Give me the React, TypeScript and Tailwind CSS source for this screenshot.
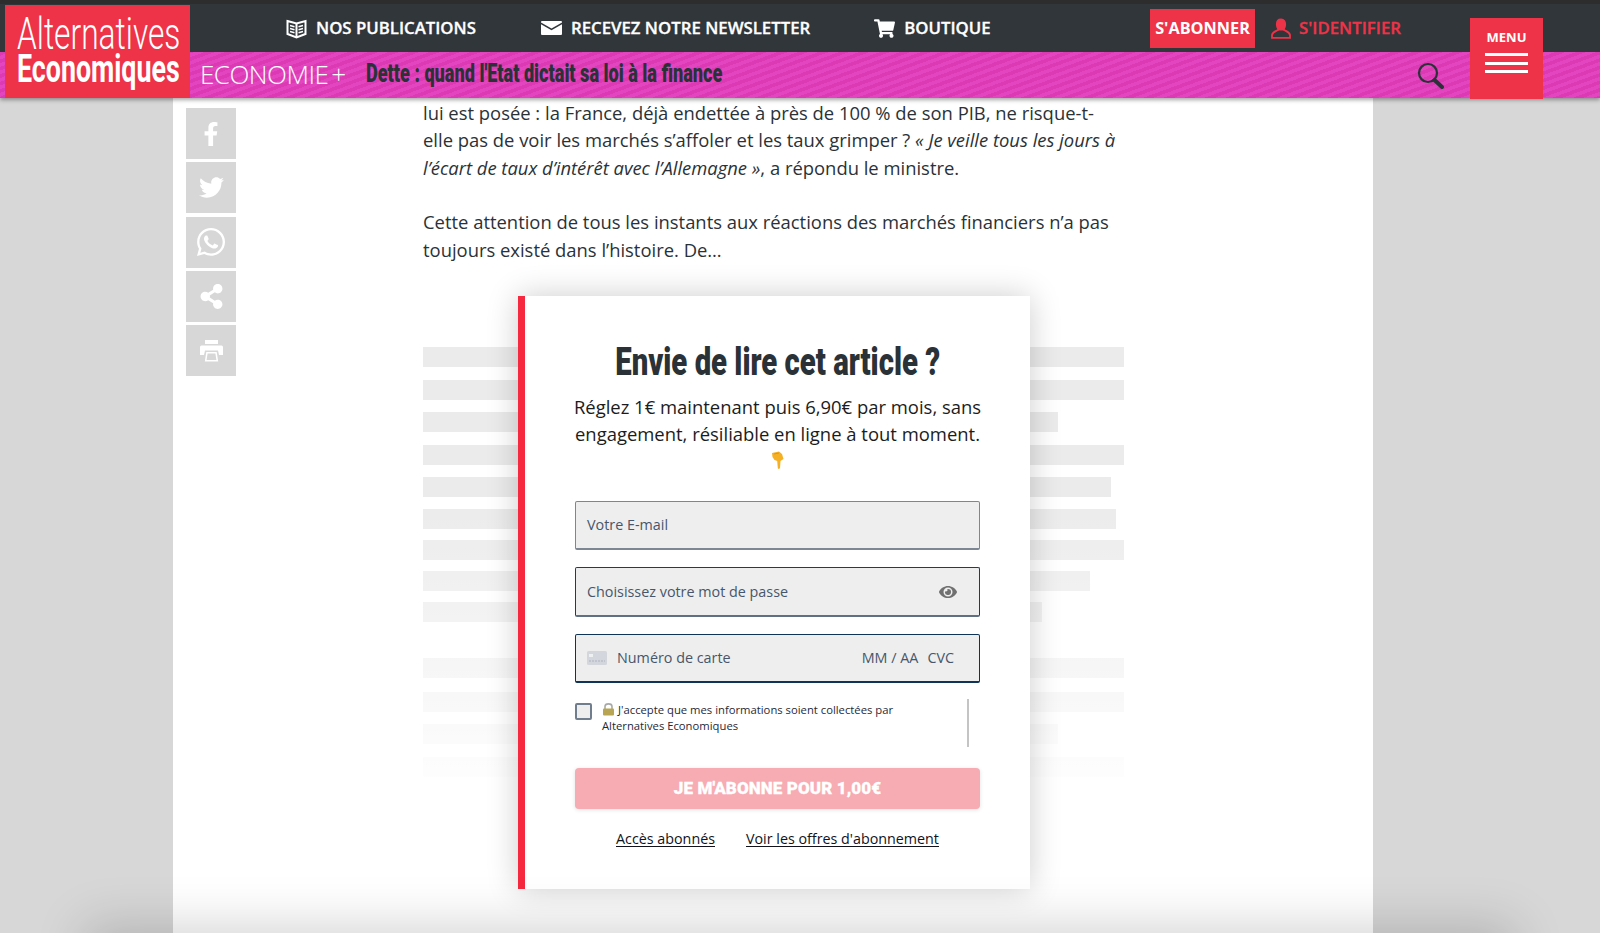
import { FaFacebookF, FaTwitter, FaWhatsapp, FaShareAlt, FaShoppingCart, FaEye } from 'react-icons/fa';

const RED = 'bg-[#ee3348]';

const BARS = [
  { top: 0, width: 701 },
  { top: 13, width: 701 },
  { top: 12, width: 635 },
  { top: 13, width: 701 },
  { top: 12, width: 688 },
  { top: 12, width: 693 },
  { top: 11, width: 701 },
  { top: 11, width: 667 },
  { top: 11, width: 619 },
  { top: 36, width: 701 },
  { top: 14, width: 701 },
  { top: 12, width: 635 },
  { top: 13, width: 701 },
];

function BookIcon() {
  return (
    <svg width="21" height="21" viewBox="0 0 21 21" fill="none" stroke="white" strokeWidth="2">
      <path d="M1.5 3 L10.5 5.5 L19.5 3 V16 L10.5 19.5 L1.5 16 Z" />
      <path d="M10.5 5.5 V19.5" />
      <path d="M4 7.5 L8.5 8.7 M4 10.5 L8.5 11.7 M4 13.5 L8.5 14.7 M17 7.5 L12.5 8.7 M17 10.5 L12.5 11.7 M17 13.5 L12.5 14.7" strokeWidth="1.4" />
    </svg>
  );
}

function MailIcon() {
  return (
    <svg width="21" height="14" viewBox="0 0 21 14" fill="white">
      <path d="M1 0 H20 Q21 0 21 1 V1.4 L10.5 7.4 L0 1.4 V1 Q0 0 1 0 Z" />
      <path d="M0 3.2 L10.5 9.2 L21 3.2 V13 Q21 14 20 14 H1 Q0 14 0 13 Z" />
    </svg>
  );
}

function UserIcon() {
  return (
    <svg width="20" height="21" viewBox="0 0 20 21" fill="none" stroke="#ee3348" strokeWidth="1.8">
      <path d="M10 1.5 C6.8 1.5 5.8 4 5.8 6.5 C5.8 9 7 10.5 7.4 11.5 H12.6 C13 10.5 14.2 9 14.2 6.5 C14.2 4 13.2 1.5 10 1.5 Z" fill="#ee3348" />
      <path d="M7.4 11.5 C6.5 13 1.5 13.5 1 17 V19.8 H19 V17 C18.5 13.5 13.5 13 12.6 11.5" />
    </svg>
  );
}

function SearchIcon() {
  return (
    <svg width="27" height="27" viewBox="0 0 27 27" fill="none" stroke="#2a3237">
      <circle cx="11" cy="11" r="9" strokeWidth="2.2" />
      <path d="M17.5 18 L25 25" strokeWidth="4" strokeLinecap="round" />
    </svg>
  );
}

function PrintIcon() {
  return (
    <svg width="25" height="22" viewBox="0 0 25 22" fill="white">
      <rect x="6" y="0" width="13" height="4" />
      <path d="M1 7 Q1 5.5 2.5 5.5 H22.5 Q24 5.5 24 7 V15 H20 L19 10.5 H6 L5 15 H1 Z" />
      <path d="M7.3 12 H17.7 L19.2 21.5 H5.8 Z M8.6 13.5 L7.6 20 H17.4 L16.4 13.5 Z" fillRule="evenodd" />
    </svg>
  );
}

function HandIcon() {
  return (
    <svg width="14" height="19" viewBox="0 0 14 19">
      <path d="M1 2 L8 0.5 L11 3 L12.5 8 L9.5 10 L9 17 Q7.8 18.8 6.8 17 L6.2 10 L3.5 9 L1.5 6 Z" fill="#f6b024" />
      <path d="M3 3 L8 2" stroke="#d98f10" strokeWidth="0.8" />
    </svg>
  );
}

function LockIcon() {
  return (
    <svg width="13" height="14" viewBox="0 0 13 14" className="mr-[3px] inline-block align-[-2px]">
      <path d="M3 7 V4.5 C3 1 10 1 10 4.5 V7" fill="none" stroke="#a9a9a9" strokeWidth="1.6" />
      <rect x="1" y="6.5" width="11" height="7" rx="1" fill="#b7a553" />
    </svg>
  );
}

function CardIcon() {
  return (
    <svg width="20" height="14" viewBox="0 0 20 14">
      <rect width="20" height="14" rx="1.5" fill="#d3d6dc" />
      <rect x="2" y="3" width="4" height="3" fill="#eef0f2" />
      <path d="M2 10 H18" stroke="#aeb3bc" strokeWidth="1" strokeDasharray="2 1" />
    </svg>
  );
}

function NavItem({ icon, label, className }: { icon: React.ReactNode; label: string; className?: string }) {
  return (
    <a className={`flex items-center gap-[9px] text-[16.8px] font-semibold text-white [-webkit-text-stroke:0.3px] ${className ?? ''}`}>
      <span className="flex w-[21px] justify-center">{icon}</span>
      {label}
    </a>
  );
}

function Header() {
  return (
    <header className="relative z-20 shrink-0 font-['Open_Sans',sans-serif] shadow-[0_2px_4px_rgba(0,0,0,0.35)]">
      <div className="flex h-[52px] items-center border-t-[4px] border-[#2d2d2d] bg-[#30363a] pl-[286px] pr-[199px]">
        <NavItem icon={<BookIcon />} label="NOS PUBLICATIONS" />
        <NavItem icon={<MailIcon />} label="RECEVEZ NOTRE NEWSLETTER" className="ml-[65px]" />
        <NavItem icon={<FaShoppingCart size={21} />} label="BOUTIQUE" className="ml-[64px]" />
        <div className="ml-auto flex items-center">
          <a className={`flex h-[39px] w-[105px] items-center justify-center ${RED} text-[16.3px] font-bold text-white`}>S'ABONNER</a>
          <span className="ml-[16px]"><UserIcon /></span>
          <a className="ml-[8px] text-[16.8px] font-semibold text-[#ee3348] [-webkit-text-stroke:0.3px]">S'IDENTIFIER</a>
        </div>
      </div>
      <div className="flex h-[46px] items-center bg-[repeating-linear-gradient(160deg,#dc39b4_0,#dc39b4_3.5px,#e344bf_3.5px,#e344bf_7px)] pl-[200px] pr-[156px]">
        <span className="-mt-[2px] text-[26px] font-light tracking-[-0.5px] text-white">ECONOMIE</span>
        <span className="-mt-[2px] ml-[3px] text-[26px] font-light text-white">+</span>
        <span className="-mt-[2px] ml-[20px] inline-block origin-left scale-x-[0.725] whitespace-nowrap font-['Roboto',sans-serif] text-[25px] font-black text-[#2a3237]">Dette : quand l'Etat dictait sa loi à la finance</span>
        <span className="ml-auto"><SearchIcon /></span>
      </div>
      <a className={`absolute left-[5px] top-[5px] h-[93px] w-[185px] overflow-hidden ${RED} font-['Roboto',sans-serif] text-white`}>
        <span className="absolute left-[12px] top-[11px] inline-block origin-left scale-x-[0.72] whitespace-nowrap text-[44px] font-light leading-[36px]">Alternatives</span>
        <span className="absolute left-[12px] top-[47px] inline-block origin-left scale-x-[0.705] whitespace-nowrap text-[38px] font-bold leading-[34px]">Economiques</span>
      </a>
      <button className={`absolute left-[1470px] top-[18px] flex h-[81px] w-[73px] flex-col items-center ${RED} pt-[10px] text-[13px] font-bold text-white`}>
        <span className="leading-[18px]">MENU</span>
        <span className="mt-[7px] flex w-[43px] flex-col gap-[5.5px]">
          <span className="h-[3px] bg-white" />
          <span className="h-[3px] bg-white" />
          <span className="h-[3px] bg-white" />
        </span>
      </button>
    </header>
  );
}

function ShareBar() {
  const icons = [
    <FaFacebookF size={24} />,
    <FaTwitter size={25} />,
    <FaWhatsapp size={32} />,
    <FaShareAlt size={25} />,
    <PrintIcon />,
  ];
  return (
    <aside className="mt-[10px] flex w-[50px] shrink-0 flex-col gap-[3.25px]">
      {icons.map((icon, i) => (
        <div key={i} className="flex h-[51px] items-center justify-center bg-[#d7d7d7] text-white">{icon}</div>
      ))}
    </aside>
  );
}

function Paywall() {
  return (
    <div className="absolute left-[345px] top-[198px] z-10 h-[593px] w-[512px] border-l-[7px] border-[#f5283f] bg-white pt-[41px] text-center font-['Open_Sans',sans-serif] shadow-[0_0_30px_rgba(0,0,0,0.2)]">
      <h2 className="inline-block scale-x-[0.771] whitespace-nowrap font-['Roboto',sans-serif] text-[38px] font-black leading-[50px] text-[#2a3237]">Envie de lire cet article ?</h2>
      <p className="mt-[6px] text-[18.45px] leading-[27px] text-[#1c1c1c]">
        Réglez 1€ maintenant puis 6,90€ par mois, sans<br />
        engagement, résiliable en ligne à tout moment.
      </p>
      <div className="flex h-[27px] items-center justify-center"><HandIcon /></div>

      <div className="mx-auto mt-[27px] flex w-[405px] flex-col text-left text-[14.35px] text-[#47566b]">
        <div className="flex h-[49px] items-center rounded-[2px] border border-b-2 border-[#7d8793] bg-[#eeeeee] px-[11px]">Votre E-mail</div>
        <div className="mt-[17px] flex h-[50px] items-center justify-between rounded-[2px] border border-b-2 border-[#173f5f] border-b-[#5f7083] bg-[#eeeeee] pl-[11px] pr-[22px]">
          Choisissez votre mot de passe
          <FaEye size={18} className="text-[#707070]" />
        </div>
        <div className="mt-[17px] flex h-[49px] items-center rounded-[2px] border border-b-2 border-[#0e3557] bg-[#eeeeee] pl-[11px] pr-[25px]">
          <CardIcon />
          <span className="ml-[10px]">Numéro de carte</span>
          <span className="ml-auto">MM / AA</span>
          <span className="ml-[9px]">CVC</span>
        </div>

        <div className="relative mt-[16px] flex h-[48px] items-start">
          <span className="mt-[4px] h-[17px] w-[17px] shrink-0 rounded-[2px] border-2 border-[#6f7d8e] bg-[#eeeeee]" />
          <p className="ml-[10px] pt-[3px] text-[11.28px] leading-[16px] text-[#1f2937]">
            <LockIcon />J'accepte que mes informations soient collectées par<br />
            Alternatives Economiques
          </p>
          <span className="absolute right-[11px] top-0 h-[48px] w-[2px] bg-[#c4c4c4]" />
        </div>

        <button className="mt-[21px] h-[41px] rounded-[4px] bg-[#f7abb2] text-center font-['Roboto',sans-serif] text-[17px] font-black tracking-[0.1px] text-white shadow-[0_1px_4px_rgba(0,0,0,0.12)] [-webkit-text-stroke:0.3px]">JE M'ABONNE POUR 1,00€</button>

        <div className="mt-[20px] flex justify-center gap-[31px] text-[14.3px] leading-[20px] text-[#10131c] underline underline-offset-2">
          <a>Accès abonnés</a>
          <a>Voir les offres d'abonnement</a>
        </div>
      </div>
    </div>
  );
}

function Article() {
  return (
    <article className="ml-[187px] w-[701px] shrink-0 pt-[1px] font-['Open_Sans',sans-serif] text-[18.42px] leading-[27.4px] text-[#2a3237]">
      <p>
        lui est posée : la France, déjà endettée à près de 100 % de son PIB, ne risque-t-<br />
        elle pas de voir les marchés s’affoler et les taux grimper ? <em>« Je veille tous les jours à</em><br />
        <em>l’écart de taux d’intérêt avec l’Allemagne »</em>, a répondu le ministre.
      </p>
      <p className="mt-[27px]">
        Cette attention de tous les instants aux réactions des marchés financiers n’a pas<br />
        toujours existé dans l’histoire. De…
      </p>
      <div className="relative mt-[84.4px]">
        {BARS.map((bar, i) => (
          <div key={i} className="h-[20px] bg-[#ebebeb]" style={{ marginTop: bar.top, width: bar.width }} />
        ))}
        <div className="absolute inset-0 bg-linear-to-b from-transparent from-35% to-white to-[105%]" />
      </div>
    </article>
  );
}

export default function App() {
  return (
    <div className="relative flex h-[933px] flex-col overflow-hidden bg-[#d7d7d7]">
      <Header />
      <main className="relative ml-[173px] flex w-[1200px] flex-1 bg-white pl-[13px]">
        <ShareBar />
        <Article />
        <Paywall />
      </main>
      <div className="absolute left-[110px] right-[110px] top-[950px] z-10 h-[40px] shadow-[0_0_50px_25px_rgba(0,0,0,0.17)]" />
    </div>
  );
}
